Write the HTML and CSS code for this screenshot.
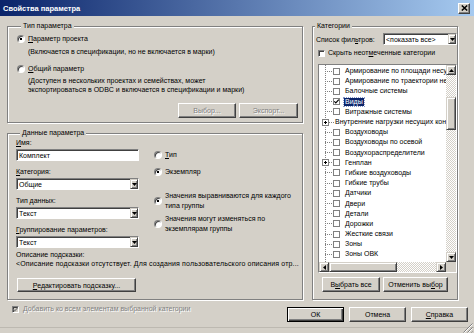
FILE: index.html
```html
<!DOCTYPE html>
<html lang="ru">
<head>
<meta charset="utf-8">
<title>Свойства параметра</title>
<link rel="stylesheet" href="styles.css">
</head>
<body>
<div class="titlebar">
  <span class="title">Свойства параметра</span>
  <span class="close"><svg width="7" height="6" viewBox="0 0 7 6"><path d="M0.8 0.5 L6.2 5.5 M6.2 0.5 L0.8 5.5" stroke="#000" stroke-width="1.5"/></svg></span>
</div>
<div class="main">
  <div class="left">
    <div class="group g-type">
      <div class="group-title">Тип параметра</div>
      <div class="radio-row r1"><span class="radio on"></span><span><u>П</u>араметр проекта</span></div>
      <div class="desc d1">(Включается в спецификации, но не включается в марки)</div>
      <div class="radio-row r2"><span class="radio"></span><span><u>О</u>бщий параметр</span></div>
      <div class="desc d2">(Доступен в нескольких проектах и семействах, может<br>экспортироваться в ODBC и включается в спецификации и марки)</div>
      <div class="btn-row"><span class="btn disabled w58">Выбор...</span><span class="btn disabled w59">Экспорт...</span></div>
    </div>
    <div class="group g-data">
      <div class="group-title">Данные параметра</div>
      <div class="g2-top">
        <div class="fields">
          <div class="field-label"><u>И</u>мя:</div>
          <div class="field-ctrl input">Комплект</div>
          <div class="field-label"><u>К</u>атегория:</div>
          <div class="field-ctrl select"><span class="sel-val">Общие</span><span class="sel-btn"><svg width="5" height="3" viewBox="0 0 5 3"><path d="M0 0H5L2.5 3Z"/></svg></span></div>
          <div class="field-label">Тип данных:</div>
          <div class="field-ctrl select"><span class="sel-val">Текст</span><span class="sel-btn"><svg width="5" height="3" viewBox="0 0 5 3"><path d="M0 0H5L2.5 3Z"/></svg></span></div>
          <div class="field-label"><u>Г</u>руппирование параметров:</div>
          <div class="field-ctrl select"><span class="sel-val">Текст</span><span class="sel-btn"><svg width="5" height="3" viewBox="0 0 5 3"><path d="M0 0H5L2.5 3Z"/></svg></span></div>
        </div>
        <div class="radios">
          <div class="radio-row rr-t"><span class="radio"></span><span><u>Т</u>ип</span></div>
          <div class="radio-row rr-e"><span class="radio on"></span><span>Экземпляр</span></div>
          <div class="radio-row rr-v1 two"><span class="radio on"></span><span>Значения выравниваются для каждого<br>типа группы</span></div>
          <div class="radio-row rr-v2 two"><span class="radio"></span><span>Значения могут изменяться по<br>экземплярам группы</span></div>
        </div>
      </div>
      <div class="hint-label">Описание подсказки:</div>
      <div class="hint-text">&lt;Описание подсказки отсутствует. Для создания пользовательского описания отр...</div>
      <div class="btn hint-btn"><span><u>Р</u>едактировать подсказку...</span></div>
    </div>
  </div>
  <div class="group g-cat">
    <div class="group-title">Категории</div>
    <div class="filter-row">
      <span>Список фил<u>ь</u>тров:</span>
      <div class="select filter-sel"><span class="sel-val">&lt;показать все&gt;</span><span class="sel-btn"><svg width="5" height="3" viewBox="0 0 5 3"><path d="M0 0H5L2.5 3Z"/></svg></span></div>
    </div>
    <div class="hide-row"><span class="chk"></span><span>Скрыть неот<u>м</u>еченные категории</span></div>
    <div class="list">
      <div class="tree">
        <div class="row"><span class="twig"></span><span class="cb"></span><span class="lbl">Армирование по площади несу</span></div>
        <div class="row"><span class="twig"></span><span class="cb"></span><span class="lbl">Армирование по траектории не</span></div>
        <div class="row"><span class="twig"></span><span class="cb"></span><span class="lbl">Балочные системы</span></div>
        <div class="row"><span class="twig"></span><span class="cb"><svg width="5" height="5" viewBox="0 0 5 5"><path d="M0.3 2.3 L1.8 3.9 L4.8 0.6" stroke="#000" stroke-width="1.2" fill="none"/></svg></span><span class="lbl sel">Виды</span></div>
        <div class="row"><span class="twig"></span><span class="cb"></span><span class="lbl">Витражные системы</span></div>
        <div class="row exp"><span class="expander"></span><span class="twig t5"></span><span class="lbl">Внутренние нагрузки несущих кон</span></div>
        <div class="row"><span class="twig"></span><span class="cb"></span><span class="lbl">Воздуховоды</span></div>
        <div class="row"><span class="twig"></span><span class="cb"></span><span class="lbl">Воздуховоды по осевой</span></div>
        <div class="row"><span class="twig"></span><span class="cb"></span><span class="lbl">Воздухораспределители</span></div>
        <div class="row exp"><span class="expander"></span><span class="twig t4"></span><span class="cb"></span><span class="lbl">Генплан</span></div>
        <div class="row"><span class="twig"></span><span class="cb"></span><span class="lbl">Гибкие воздуховоды</span></div>
        <div class="row"><span class="twig"></span><span class="cb"></span><span class="lbl">Гибкие трубы</span></div>
        <div class="row"><span class="twig"></span><span class="cb"></span><span class="lbl">Датчики</span></div>
        <div class="row"><span class="twig"></span><span class="cb"></span><span class="lbl">Двери</span></div>
        <div class="row"><span class="twig"></span><span class="cb"></span><span class="lbl">Детали</span></div>
        <div class="row"><span class="twig"></span><span class="cb"></span><span class="lbl">Дорожки</span></div>
        <div class="row"><span class="twig"></span><span class="cb"></span><span class="lbl">Жесткие связи</span></div>
        <div class="row"><span class="twig"></span><span class="cb"></span><span class="lbl">Зоны</span></div>
        <div class="row"><span class="twig"></span><span class="cb"></span><span class="lbl">Зоны ОВК</span></div>
      </div>
      <div class="vscroll">
        <span class="sb-btn"><svg width="5" height="3" viewBox="0 0 5 3"><path d="M0 3H5L2.5 0Z"/></svg></span>
        <span class="sb-track vt1"></span>
        <span class="sb-thumb vthumb"></span>
        <span class="sb-track grow"></span>
        <span class="sb-btn"><svg width="5" height="3" viewBox="0 0 5 3"><path d="M0 0H5L2.5 3Z"/></svg></span>
      </div>
      <div class="hscroll">
        <span class="sb-btn"><svg width="3" height="5" viewBox="0 0 3 5"><path d="M3 0V5L0 2.5Z"/></svg></span>
        <span class="sb-thumb hthumb"></span>
        <span class="sb-track grow"></span>
        <span class="sb-btn"><svg width="3" height="5" viewBox="0 0 3 5"><path d="M0 0V5L3 2.5Z"/></svg></span>
      </div>
      <div class="corner"></div>
    </div>
    <div class="cat-btns"><span class="btn w58">В<u>ы</u>брать все</span><span class="btn w65">Отменить вы<u>б</u>ор</span></div>
  </div>
</div>
<div class="footer">
  <div class="add-row"><span class="chk disabled"><svg width="5" height="5" viewBox="0 0 5 5"><path d="M0.3 2.3 L1.8 3.9 L4.8 0.6" stroke="#808080" stroke-width="1.2" fill="none"/></svg></span><span class="dis-text">Добавить ко всем элементам выбранной категории</span></div>
  <div class="dlg-btns"><span class="btn default w57">ОК</span><span class="btn w57">Отмена</span><span class="btn w57"><span><u>С</u>правка</span></span></div>
</div>
<div class="bottom">
  <svg class="grip" width="11" height="11" viewBox="0 0 11 11"><path d="M10.5 1.5 L1.5 10.5 M10.5 5.5 L5.5 10.5 M10.5 9.5 L9.5 10.5" stroke="#808080"/><path d="M10.5 2.5 L2.5 10.5 M10.5 6.5 L6.5 10.5" stroke="#fff"/></svg>
</div>
</body>
</html>
```

FILE: styles.css
```css
* { box-sizing: border-box; }
html, body { margin: 0; padding: 0; }
body {
  width: 474px;
  height: 333px;
  overflow: hidden;
  background: #d4d0c8;
  font-family: "Liberation Sans", Arial, sans-serif;
  font-size: 7px;
  color: #000;
}
u { text-decoration-thickness: 1px; text-underline-offset: 1px; }

.titlebar {
  height: 16px;
  display: flex;
  align-items: center;
  justify-content: space-between;
  padding: 0 4px 0 3px;
  background: linear-gradient(90deg, #0a246a, #a6caf0);
}
.title { color: #fff; font-weight: bold; font-size: 7.5px; }
.close {
  width: 12px;
  height: 11px;
  background: #d4d0c8;
  border: 1px solid;
  border-color: #fff #404040 #404040 #fff;
  box-shadow: inset -1px -1px #808080;
  display: flex;
  align-items: center;
  justify-content: center;
}

.main {
  display: grid;
  grid-template-columns: 296px 146px;
  column-gap: 9px;
  padding: 10px 0 0 7px;
}
.left { display: flex; flex-direction: column; }

.group {
  border: 1px solid #808080;
  box-shadow: inset 1px 1px #fff, 1px 1px #fff;
}
.group-title {
  line-height: 10px;
  margin: -6px 0 0 4px;
  padding: 0 2px;
  background: #d4d0c8;
  width: max-content;
}

.radio-row { display: flex; align-items: center; line-height: 10px; }
.radio {
  width: 8px;
  height: 8px;
  flex: none;
  margin-right: 3px;
  border-radius: 50%;
  background: #fff;
  border: 1px solid;
  border-color: #808080 #fff #fff #808080;
  box-shadow: inset 1px 1px #404040;
  display: flex;
  align-items: center;
  justify-content: center;
}
.radio.on::after {
  content: "";
  width: 2px;
  height: 2px;
  background: #000;
}

.btn {
  height: 15px;
  display: flex;
  align-items: center;
  justify-content: center;
  background: #d4d0c8;
  border: 1px solid;
  border-color: #fff #404040 #404040 #fff;
  box-shadow: inset -1px -1px #808080;
  white-space: nowrap;
  flex: none;
}
.btn.disabled { color: #808080; text-shadow: 1px 1px #fff; }
.btn.default {
  border-color: #000;
  box-shadow: inset 1px 1px #fff, inset -1px -1px #404040, inset -2px -2px #808080;
}
.w57 { width: 57px; }
.w58 { width: 58px; }
.w59 { width: 59px; }
.w65 { width: 65px; }

/* group 1 */
.g-type { height: 97px; padding: 0 4px 0 9px; }
.r1 { margin-top: 3px; }
.desc { padding-left: 11px; }
.d1 { margin-top: 3px; line-height: 10px; }
.r2 { margin-top: 7px; }
.d2 { margin-top: 2px; line-height: 9px; }
.btn-row { display: flex; justify-content: flex-end; gap: 3px; margin-top: 9px; }

/* group 2 */
.g-data { height: 167px; margin-top: 10px; padding: 0 0 0 8px; }
.g2-top { display: flex; }
.fields { width: 123px; }
.field-label { line-height: 10px; margin-top: 6px; }
.field-label:first-child { margin-top: 0; }
.field-ctrl { margin-top: 1px; }
.input, .select {
  height: 12px;
  background: #fff;
  border: 1px solid;
  border-color: #808080 #fff #fff #808080;
  box-shadow: inset 1px 1px #404040;
  display: flex;
  align-items: center;
  padding-left: 2px;
  line-height: 9px;
}
.sel-val { flex: 1; white-space: nowrap; overflow: hidden; }
.sel-btn {
  width: 8px;
  height: 10px;
  flex: none;
  background: #d4d0c8;
  border: 1px solid;
  border-color: #d4d0c8 #404040 #404040 #d4d0c8;
  box-shadow: inset 1px 1px #fff, inset -1px -1px #808080;
  display: flex;
  align-items: center;
  justify-content: center;
}
.sel-btn svg, .sb-btn svg { display: block; }

.radios { margin-left: 15px; padding-top: 12px; }
.rr-e { margin-top: 7px; }
.rr-v1 { margin-top: 14px; }
.rr-v2 { margin-top: 3px; }
.hint-label { line-height: 9px; margin-top: 2px; }
.hint-text { line-height: 9px; white-space: nowrap; overflow: hidden; width: 287px; letter-spacing: 0.14px; }
.hint-btn { width: 119px; height: 14px; margin: 10px 0 0 1px; }

/* categories */
.g-cat { height: 274px; }
.g-cat .group-title { margin-left: 2px; }
.filter-row {
  display: flex;
  align-items: center;
  justify-content: space-between;
  height: 12px;
  margin-top: 2px;
  padding-left: 3px;
  white-space: nowrap;
}
.filter-sel { width: 74px; }
.hide-row {
  display: flex;
  align-items: center;
  line-height: 10px;
  margin-top: 3px;
  padding-left: 5px;
  white-space: nowrap;
}
.chk {
  width: 7px;
  height: 7px;
  flex: none;
  margin-right: 3px;
  background: #fff;
  border: 1px solid;
  border-color: #808080 #fff #fff #808080;
  box-shadow: inset 1px 1px #404040;
  display: flex;
  align-items: center;
  justify-content: center;
}
.chk.disabled { background: #d4d0c8; }

.list {
  width: 139px;
  height: 209px;
  margin: 6px 0 0 5px;
  border: 1px solid;
  border-color: #808080 #fff #fff #808080;
  display: grid;
  grid-template-columns: 127px 10px;
  grid-template-rows: 197px 10px;
  background: #fff;
}
.tree {
  overflow: hidden;
  padding-top: 1px;
  background: linear-gradient(#808080 50%, transparent 50%) 6px 0 / 1px 2px repeat-y, #fff;
}
.row {
  height: 10.2px;
  display: flex;
  align-items: center;
  padding-left: 6px;
  white-space: nowrap;
}
.row.exp { padding-left: 3px; }
.twig {
  width: 8px;
  height: 1px;
  flex: none;
  background: linear-gradient(90deg, #808080 50%, transparent 50%) 0 0 / 2px 1px;
}
.twig.t4 { width: 4px; }
.twig.t5 { width: 5px; }
.expander {
  width: 7px;
  height: 7px;
  flex: none;
  border: 1px solid #808080;
  background:
    linear-gradient(#000, #000) center / 3px 1px no-repeat,
    linear-gradient(#000, #000) center / 1px 3px no-repeat,
    #fff;
}
.cb {
  width: 7px;
  height: 7px;
  flex: none;
  margin-right: 4px;
  border: 1px solid #808080;
  background: #fff;
  display: flex;
  align-items: center;
  justify-content: center;
}
.lbl { padding: 0 1px; line-height: 8px; }
.lbl.sel { background: #0a246a; color: #fff; outline: 1px dotted #8a9ac8; outline-offset: 0; }

.vscroll, .hscroll { display: flex; background: #d4d0c8; }
.vscroll { flex-direction: column; }
.sb-btn {
  width: 10px;
  height: 10px;
  flex: none;
  background: #d4d0c8;
  border: 1px solid;
  border-color: #d4d0c8 #404040 #404040 #d4d0c8;
  box-shadow: inset 1px 1px #fff, inset -1px -1px #808080;
  display: flex;
  align-items: center;
  justify-content: center;
}
.sb-track {
  flex: none;
  background: repeating-conic-gradient(#fff 0 25%, #d4d0c8 0 50%) 0 0 / 2px 2px;
}
.sb-track.grow { flex: 1; }
.vt1 { height: 22px; }
.sb-thumb {
  flex: none;
  background: #d4d0c8;
  border: 1px solid;
  border-color: #d4d0c8 #404040 #404040 #d4d0c8;
  box-shadow: inset 1px 1px #fff, inset -1px -1px #808080;
}
.vthumb { height: 33px; }
.hthumb { width: 68px; }
.corner { background: #d4d0c8; }

.cat-btns { display: flex; gap: 3px; margin-top: 4px; padding-left: 9px; }

/* footer */
.footer {
  display: flex;
  justify-content: space-between;
  margin-top: 7px;
  height: 15px;
  padding: 0 6px 0 12px;
}
.add-row {
  display: flex;
  align-items: center;
  line-height: 10px;
  height: 10px;
  margin-top: -3px;
  white-space: nowrap;
}
.add-row .chk { margin-right: 4px; }
.dis-text { color: #808080; text-shadow: 1px 1px #fff; }
.dlg-btns { display: flex; gap: 5px; }

.bottom {
  height: 11px;
  display: flex;
  justify-content: flex-end;
  align-items: flex-end;
  padding-right: 1px;
  background: linear-gradient(#bdb9b1, #bdb9b1) 0 5px / 100% 1px no-repeat;
}
.grip { display: block; }
```
